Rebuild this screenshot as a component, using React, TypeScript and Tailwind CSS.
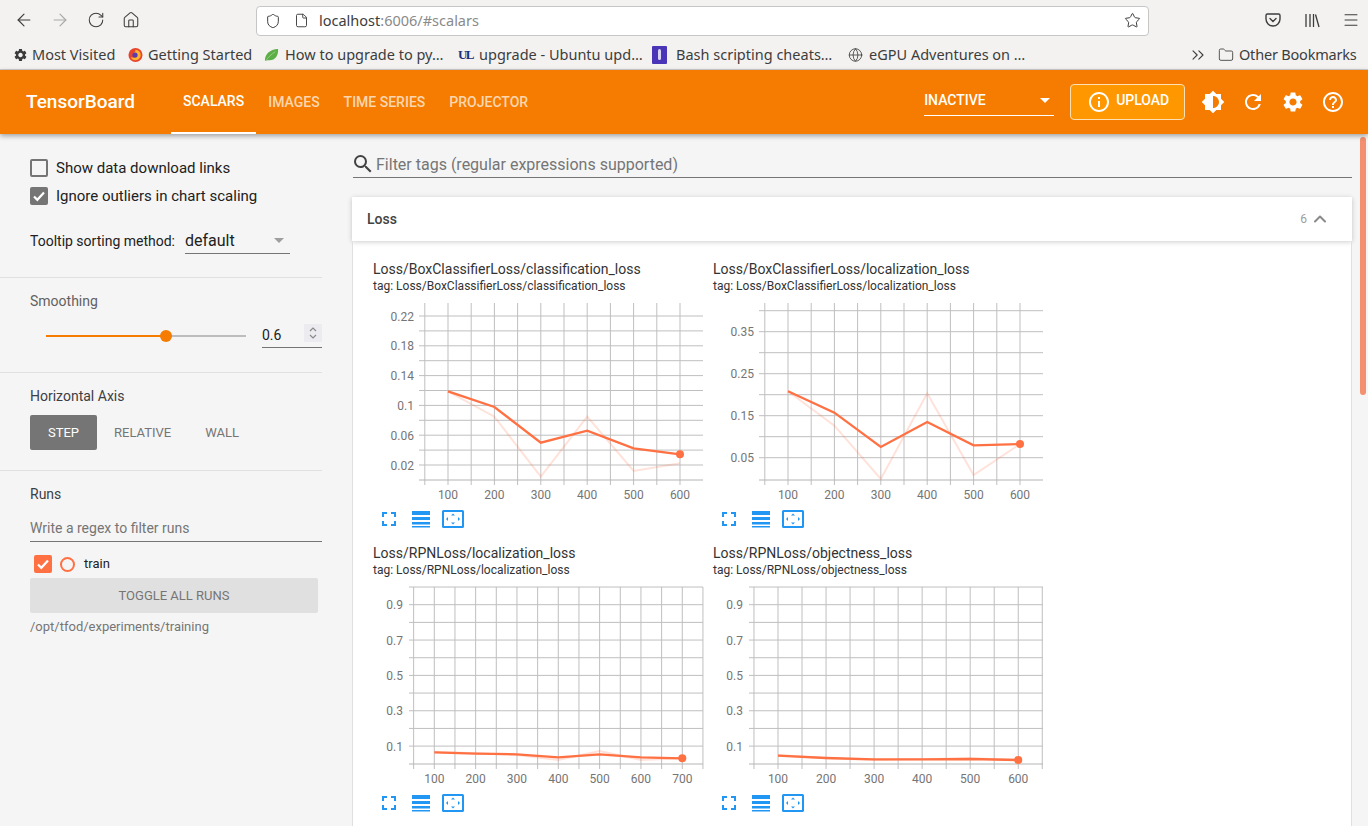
import { ArrowLeft, ArrowRight, ChevronsRight, ChevronUp, File, Folder, Globe, House, Menu, RotateCw, Shield, Star } from "lucide-react";
import { MdBrightness6, MdHelpOutline, MdInfoOutline, MdRefresh, MdSearch, MdSettings } from "react-icons/md";

type ChartSpec = {
  title: string;
  left: number;
  right: number;
  firstX: number;
  stepX: number;
  labelsX: string[];
  firstY: number;
  stepY: number;
  labelsY: string[];
  labelRight: number;
  smooth: number[];
  raw: number[];
};

const charts: ChartSpec[] = [
  {
    title: "Loss/BoxClassifierLoss/classification_loss",
    left: 51,
    right: 330,
    firstX: 75,
    stepX: 46.4,
    labelsX: ["100", "200", "300", "400", "500", "600"],
    firstY: 21,
    stepY: 29.8,
    labelsY: ["0.22", "0.18", "0.14", "0.1", "0.06", "0.02"],
    labelRight: 41,
    smooth: [96.3, 112, 147.7, 135.7, 153.3, 159.3],
    raw: [96.3, 121.7, 181.7, 121.7, 176, 168.3],
  },
  {
    title: "Loss/BoxClassifierLoss/localization_loss",
    left: 51,
    right: 330,
    firstX: 75,
    stepX: 46.4,
    labelsX: ["100", "200", "300", "400", "500", "600"],
    firstY: 36.7,
    stepY: 42,
    labelsY: ["0.35", "0.25", "0.15", "0.05"],
    labelRight: 41,
    smooth: [96.3, 117.7, 152, 127, 150.3, 149],
    raw: [96.3, 130.7, 184, 98.3, 180, 149],
  },
  {
    title: "Loss/RPNLoss/localization_loss",
    left: 41,
    right: 330,
    firstX: 61.3,
    stepX: 41.33,
    labelsX: ["100", "200", "300", "400", "500", "600", "700"],
    firstY: 25.7,
    stepY: 35.35,
    labelsY: ["0.9", "0.7", "0.5", "0.3", "0.1"],
    labelRight: 30,
    smooth: [173.3, 174.7, 175.3, 178.3, 175.3, 178.3, 179.3],
    raw: [172.7, 174.3, 176, 181, 172, 181, 179.3],
  },
  {
    title: "Loss/RPNLoss/objectness_loss",
    left: 41,
    right: 330,
    firstX: 65,
    stepX: 48.05,
    labelsX: ["100", "200", "300", "400", "500", "600"],
    firstY: 25.7,
    stepY: 35.35,
    labelsY: ["0.9", "0.7", "0.5", "0.3", "0.1"],
    labelRight: 30,
    smooth: [176.7, 179, 180.3, 180.3, 180, 181],
    raw: [176, 179.3, 181, 180.3, 179.3, 181],
  },
];

const TOP = 8;
const BOTTOM = 185;

function Chart({ spec }: { spec: ChartSpec }) {
  const xLines: number[] = [];
  for (let x = spec.firstX - spec.stepX / 2; x <= spec.right; x += spec.stepX / 2) xLines.push(x);
  const yLines: number[] = [];
  for (let y = spec.firstY - spec.stepY / 2; y < BOTTOM - 2; y += spec.stepY / 2) {
    if (y >= TOP) yLines.push(y);
  }
  const pts = (ys: number[]) => ys.map((y, i) => `${spec.firstX + i * spec.stepX},${y}`).join(" ");
  const last = spec.smooth.length - 1;

  return (
    <svg width="340" height="205" className="block font-[Roboto,sans-serif]">
      {xLines.map((x) => (
        <line key={x} x1={x} x2={x} y1={TOP} y2={BOTTOM + 5} stroke="#bfbfbf" strokeWidth="1" />
      ))}
      {yLines.map((y) => (
        <line key={y} x1={spec.left - 5} x2={spec.right} y1={y} y2={y} stroke="#bfbfbf" strokeWidth="1" />
      ))}
      <line x1={spec.left - 5} x2={spec.right} y1={BOTTOM} y2={BOTTOM} stroke="#b4b4b4" strokeWidth="1" />
      {spec.labelsY.map((label, i) => (
        <text key={label} x={spec.labelRight} y={spec.firstY + i * spec.stepY + 4.5} textAnchor="end" fontSize="12" fill="#757575">
          {label}
        </text>
      ))}
      {spec.labelsX.map((label, i) => (
        <text key={label} x={spec.firstX + i * spec.stepX} y={203.5} textAnchor="middle" fontSize="12" fill="#757575">
          {label}
        </text>
      ))}
      <polyline points={pts(spec.raw)} fill="none" stroke="#ff7043" strokeOpacity="0.2" strokeWidth="2" />
      <polyline points={pts(spec.smooth)} fill="none" stroke="#ff7043" strokeWidth="2.3" />
      <circle cx={spec.firstX + last * spec.stepX} cy={spec.smooth[last]} r="4" fill="#ff7043" />
    </svg>
  );
}

function ChartActions() {
  return (
    <div className="flex items-center pl-[9px] h-[18px] mt-[10px]">
      <svg width="14" height="14" viewBox="0 0 14 14" fill="#2196f3">
        <path d="M0 0h5v2H2v3H0zM9 0h5v5h-2V2H9zM0 9h2v3h3v2H0zM12 9h2v5H9v-2h3z" />
      </svg>
      <svg width="18" height="17" viewBox="0 0 18 17" fill="#2196f3" className="ml-[16px]">
        <path d="M0 0h18v4H0zM0 6h18v3H0zM0 11h18v2.500H0zM0 15h18v1.500H0z" />
      </svg>
      <svg width="22" height="18" viewBox="0 0 22 18" fill="#2196f3" className="ml-[12px]">
        <path d="M1.500 0h19A1.500 1.500 0 0 1 22 1.500v15a1.500 1.500 0 0 1-1.500 1.500h-19A1.500 1.500 0 0 1 0 16.500v-15A1.500 1.500 0 0 1 1.500 0zM2 2v14h18V2z" fillRule="evenodd" />
        <path d="M11 3.500l2 2H9zM11 14.500l-2-2h4zM4 9l2-2v4zM18 9l-2 2V7z" />
      </svg>
    </div>
  );
}

function ChartTile({ spec }: { spec: ChartSpec }) {
  return (
    <div className="w-[340px] h-[284px]">
      <div className="text-[14px] leading-[17px] text-[#333333] whitespace-nowrap">{spec.title}</div>
      <div className="text-[12px] leading-[16px] mb-[1px] text-[#333333] whitespace-nowrap">tag: {spec.title}</div>
      <Chart spec={spec} />
      <ChartActions />
    </div>
  );
}

function FirefoxIcon() {
  return (
    <svg width="16" height="16" viewBox="0 0 16 16">
      <circle cx="8" cy="8" r="7.500" fill="#e8452c" />
      <path d="M8 2.500a5.500 5.500 0 0 1 5.500 5.500c0 3-2.400 5.500-5.500 5.500A5.500 5.500 0 0 1 3 10c1.500 1 4.500 1 5-1 .3-1.500-2-1.500-2-2.500s2-1 2-4z" fill="#ffb52e" />
      <circle cx="7.500" cy="8" r="2.800" fill="#5b3bb0" />
    </svg>
  );
}

function LeafIcon() {
  return (
    <svg width="16" height="16" viewBox="0 0 16 16">
      <path d="M1 14C1 7 6 2 15 1.500c.5 7-3 12.500-10 12-1.500 0-3 .5-4 .5z" fill="#5cae48" />
      <path d="M1.500 14.500C5 10 8 7 12 4.500" stroke="#a8d890" strokeWidth="0.8" fill="none" />
    </svg>
  );
}

function UlIcon() {
  return (
    <span className="block font-['Liberation_Serif',serif] font-bold text-[13px] leading-none tracking-[-1.500px] text-[#1c2f78]">UL</span>
  );
}

function BashIcon() {
  return (
    <svg width="15" height="18" viewBox="0 0 15 18">
      <rect width="15" height="18" rx="1" fill="#4a35b8" />
      <rect x="6" y="3" width="3" height="11" rx="1.500" fill="#d8d4f4" />
    </svg>
  );
}

const bookmarks = [
  { width: 115, gap: 4, label: "Most Visited", icon: <MdSettings size={16} className="text-[#3b3b3b]" /> },
  { width: 136, gap: 5, label: "Getting Started", icon: <FirefoxIcon /> },
  { width: 194, gap: 6, label: "How to upgrade to py…", icon: <LeafIcon /> },
  { width: 194, gap: 6, label: "upgrade - Ubuntu upd…", icon: <UlIcon /> },
  { width: 196, gap: 9, label: "Bash scripting cheats…", icon: <BashIcon /> },
  { width: 200, gap: 6, label: "eGPU Adventures on …", icon: <Globe size={16} strokeWidth={1.3} className="text-[#3b3b3b]" /> },
];

function BrowserChrome() {
  return (
    <div className="h-[70px] shrink-0 bg-[#f3f2f1] border-b border-[#cdcdcd] font-['Noto_Sans',sans-serif] text-[#3d3d3d]">
      <div className="h-[40px] flex items-center">
        <div className="w-[256px] flex items-center pl-[14px] pb-[1px]">
          <ArrowLeft size={20} strokeWidth={1.4} />
          <ArrowRight size={20} strokeWidth={1.4} className="ml-[16px] text-[#a8a8a8]" />
          <RotateCw size={18} strokeWidth={1.4} className="ml-[17px]" />
          <House size={18} strokeWidth={1.4} className="ml-[17px]" />
        </div>
        <div className="w-[893px] h-[30px] flex items-center bg-white border border-[#c6c6c6] rounded-[4px] mt-[1px]">
          <Shield size={16} strokeWidth={1.5} className="ml-[8px]" />
          <File size={15} strokeWidth={1.5} className="ml-[13px]" />
          <span className="ml-[10px] text-[14.500px]">
            localhost<span className="text-[#8a8a8a]">:6006/#scalars</span>
          </span>
          <Star size={17} strokeWidth={1.4} className="ml-auto mr-[7px]" />
        </div>
        <div className="ml-[116px] flex items-center">
          <svg width="16" height="16" viewBox="0 0 16 16" fill="none" stroke="currentColor" strokeWidth="1.4">
            <path d="M2.500 2h11A1.500 1.500 0 0 1 15 3.500V7a7 7 0 0 1-14 0V3.500A1.500 1.500 0 0 1 2.500 2z" />
            <path d="M5 6.500l3 3 3-3" strokeLinecap="round" />
          </svg>
          <svg width="16" height="16" viewBox="0 0 16 16" fill="none" stroke="currentColor" strokeWidth="1.300" className="ml-[23px]">
            <path d="M2 2v13M6 2v13M9.500 2v13M11.500 2.500l3.500 12.500" />
          </svg>
          <Menu size={18} strokeWidth={1.4} className="ml-[22px]" />
        </div>
      </div>
      <div className="h-[29px] flex items-center pl-[13px] text-[14.500px] whitespace-nowrap">
        {bookmarks.map((b) => (
          <div key={b.label} className="flex items-center shrink-0" style={{ width: b.width }}>
            <span className="flex items-center justify-center w-[15px] shrink-0">{b.icon}</span>
            <span style={{ marginLeft: b.gap }}>{b.label}</span>
          </div>
        ))}
        <ChevronsRight size={20} strokeWidth={1.3} className="ml-[140px] shrink-0" />
        <Folder size={16} strokeWidth={1.3} className="ml-[10px] shrink-0" />
        <span className="ml-[5px] tracking-[-0.2px]">Other Bookmarks</span>
      </div>
    </div>
  );
}

function TopBar() {
  return (
    <header className="relative z-10 h-[64px] shrink-0 bg-[#f57c00] shadow-[0_2px_5px_rgba(0,0,0,0.35)] flex items-center text-white font-[Roboto,sans-serif]">
      <div className="w-[171px] pl-[26px] text-[19px] font-medium">TensorBoard</div>
      <nav className="flex h-full text-[14px] font-medium text-white/70">
        <div className="h-full px-[12px] flex items-center text-white border-b-2 border-white">SCALARS</div>
        <div className="h-full px-[12px] flex items-center">IMAGES</div>
        <div className="h-full px-[12px] flex items-center">TIME SERIES</div>
        <div className="h-full px-[12px] flex items-center">PROJECTOR</div>
      </nav>
      <div className="ml-[384px] w-[130px] h-[31px] mb-[3px] flex items-center justify-between border-b border-white text-[14px] font-medium">
        <span>INACTIVE</span>
        <span className="w-0 h-0 mr-[4px] border-x-[5px] border-x-transparent border-t-[5px] border-t-white" />
      </div>
      <div className="ml-[16px] w-[115px] h-[36px] flex items-center pl-[16px] bg-[#ff9800] border border-[#ffe0b2] rounded-[4px] text-[14px] font-medium">
        <MdInfoOutline size={24} />
        <span className="ml-[5px] mb-[3px]">UPLOAD</span>
      </div>
      <div className="ml-[16px] flex items-center gap-[16px]">
        <MdBrightness6 size={24} />
        <MdRefresh size={24} />
        <MdSettings size={24} />
        <MdHelpOutline size={24} />
      </div>
    </header>
  );
}

function CheckMark({ size = 14 }: { size?: number }) {
  return (
    <svg width={size} height={size} viewBox="0 0 14 14" fill="none" stroke="white" strokeWidth="2.200">
      <path d="M2 7.500l3.300 3.300L12 3.500" />
    </svg>
  );
}

function Sidebar() {
  return (
    <aside className="w-[322px] shrink-0 text-[14px] text-[#3c4043]">
      <section className="h-[144px] pl-[30px] pt-[25px] border-b border-[#e0e0e0]">
        <div className="flex items-center h-[18px]">
          <span className="w-[18px] h-[18px] border-2 border-[#757575] rounded-[2px]" />
          <span className="ml-[8px] text-[15px] text-[#212121]">Show data download links</span>
        </div>
        <div className="flex items-center h-[18px] mt-[10px]">
          <span className="w-[18px] h-[18px] bg-[#757575] rounded-[2px] flex items-center justify-center">
            <CheckMark />
          </span>
          <span className="ml-[8px] text-[15px] text-[#212121]">Ignore outliers in chart scaling</span>
        </div>
        <div className="flex items-center mt-[23px]">
          <span className="w-[155px] text-[#212121]">Tooltip sorting method:</span>
          <div className="w-[105px] h-[26px] flex items-center justify-between border-b border-[#757575] text-[16px] text-[#212121]">
            <span>default</span>
            <span className="w-0 h-0 mr-[6px] border-x-[5px] border-x-transparent border-t-[5px] border-t-[#9e9e9e]" />
          </div>
        </div>
      </section>

      <section className="h-[95px] pl-[30px] pt-[15px] border-b border-[#e0e0e0]">
        <div className="leading-[17px] text-[#616161]">Smoothing</div>
        <div className="flex items-center mt-[12px]">
          <div className="relative ml-[16px] mt-[2px] w-[200px] h-[2px] bg-[#bdbdbd]">
            <div className="h-full w-[120px] bg-[#f57c00]" />
            <span className="absolute left-[114px] top-[-5px] w-[12px] h-[12px] rounded-full bg-[#f57c00]" />
          </div>
          <div className="ml-[16px] w-[60px] h-[26px] flex items-center justify-between border-b border-[#757575] text-[#212121]">
            <span className="pt-[2px]">0.6</span>
            <span className="w-[18px] h-[18px] mb-[3px] bg-[#ececf0] flex flex-col items-center justify-center text-[#8a8a8a]">
              <svg width="10" height="14" viewBox="0 0 10 14" fill="none" stroke="currentColor" strokeWidth="1.200">
                <path d="M2 5l3-3 3 3M2 9l3 3 3-3" />
              </svg>
            </span>
          </div>
        </div>
      </section>

      <section className="h-[98px] pl-[30px] pt-[15px] border-b border-[#e0e0e0]">
        <div className="leading-[17px]">Horizontal Axis</div>
        <div className="flex items-center mt-[10px] text-[13px] text-[#757575]">
          <span className="w-[67px] h-[35px] flex items-center justify-center bg-[#757575] text-white rounded-[2px]">STEP</span>
          <span className="ml-[17px]">RELATIVE</span>
          <span className="ml-[34px]">WALL</span>
        </div>
      </section>

      <section className="pl-[30px] pt-[15px]">
        <div className="leading-[17px]">Runs</div>
        <div className="h-[28px] mt-[11px] flex items-center border-b border-[#757575] text-[#757575] pt-[2px]">
          Write a regex to filter runs
        </div>
        <div className="flex items-center h-[18px] mt-[13px] pl-[4px]">
          <span className="w-[18px] h-[18px] bg-[#ff7043] rounded-[2px] flex items-center justify-center">
            <CheckMark />
          </span>
          <span className="ml-[8px] w-[15px] h-[15px] rounded-full border-2 border-[#ff7043]" />
          <span className="ml-[9px] text-[13px] text-[#212121]">train</span>
        </div>
        <div className="w-[288px] h-[35px] mt-[5px] flex items-center justify-center bg-[#e0e0e0] rounded-[2px] text-[13px] text-[#757575]">
          TOGGLE ALL RUNS
        </div>
        <div className="mt-[6px] text-[13px] leading-[16px] text-[#757575]">/opt/tfod/experiments/training</div>
      </section>
    </aside>
  );
}

function MainPane() {
  return (
    <main className="flex-1 min-w-0 pl-[30px] pr-[16px]">
      <div className="h-[44px] flex items-end border-b border-[#757575] ml-[1px] text-[16px] text-[#757575]">
        <MdSearch size={24} className="-ml-[2px] mb-[1px] text-[#424242]" />
        <span className="ml-[1px]">Filter tags (regular expressions supported)</span>
      </div>
      <section className="mt-[19px] bg-white">
        <div className="h-[44px] flex items-center pl-[15px] pr-[22px] bg-white shadow-[0_1px_5px_rgba(0,0,0,0.2)] text-[14px] font-medium text-[#424242]">
          <span>Loss</span>
          <span className="ml-auto text-[12px] font-normal text-[#9e9e9e]">6</span>
          <ChevronUp size={20} strokeWidth={2.4} className="ml-[3px] text-[#8a8a8a]" />
        </div>
        <div className="grid grid-cols-[340px_340px] pl-[20px] pt-[20px] border-x border-[#e0e0e0]">
          {charts.map((spec) => (
            <ChartTile key={spec.title} spec={spec} />
          ))}
        </div>
      </section>
    </main>
  );
}

export default function App() {
  return (
    <div className="relative w-[1368px] h-[826px] overflow-hidden flex flex-col bg-[#f5f5f5] font-[Roboto,sans-serif]">
      <BrowserChrome />
      <TopBar />
      <div className="flex flex-1 min-h-0">
        <Sidebar />
        <MainPane />
      </div>
      <div className="absolute left-[1360px] top-[137px] w-[6px] h-[258px] rounded-[3px] bg-[#f29070]" />
    </div>
  );
}
